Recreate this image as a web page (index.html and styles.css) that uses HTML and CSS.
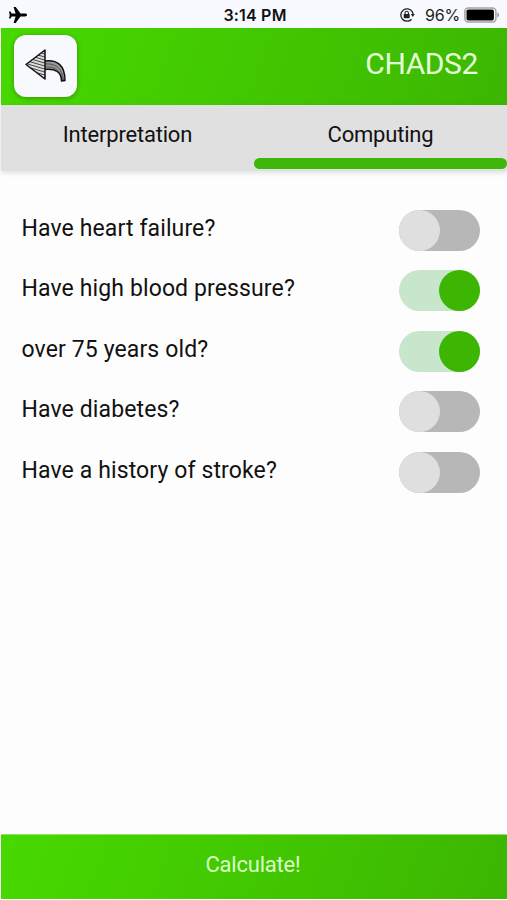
FILE: index.html
```html
<!DOCTYPE html>
<html lang="en">
<head>
<meta charset="utf-8">
<title>CHADS2</title>
<link rel="stylesheet" href="styles.css">
</head>
<body>
<div class="status">
  <svg class="plane" width="20" height="18" viewBox="0 0 20 18"><path d="M19 9c0-1-.9-1.400-2-1.400h-4.500L7.700 1H5.600l2 6.600H3.700L2.500 5.500H1L1.700 9 1 12.500h1.500l1.200-2.100h3.900L5.600 17h2.100l4.800-6.600H17c1.100 0 2-.4 2-1.400z"/></svg>
  <span class="time">3:14 PM</span>
  <div class="status-right">
    <svg width="16" height="16" viewBox="0 0 16 16"><path d="M13.200 4.600A6.200 6.200 0 1 0 12.600 12.200M13.200 4.600a6.200 6.200 0 0 1 .9 3.400" fill="none" stroke="#222" stroke-width="1.300"/><path d="M11.800 7h4l-2 3z" fill="#222"/><rect x="4.700" y="7" width="6" height="4.200" rx=".6" fill="#222"/><path d="M6 7.200V6a1.700 1.700 0 0 1 3.400 0v1.200" fill="none" stroke="#222" stroke-width="1.100"/></svg>
    <span class="percent">96%</span>
    <svg class="battery" width="36" height="16" viewBox="0 0 36 16"><rect x=".9" y=".9" width="31" height="14.200" rx="3.500" fill="#fff" stroke="#a3a1a8" stroke-width="1.500"/><rect x="2.500" y="2.500" width="27.400" height="11" rx="1.800"/><path d="M33.300 5.500c2.300.7 2.300 4.300 0 5z" fill="#98989c"/></svg>
  </div>
</div>
<header class="header">
  <button class="back" aria-label="Back">
    <svg width="44" height="38" viewBox="0 0 44 38">
      <defs>
        <clipPath id="head"><path d="M2 17 21 3v29z"/></clipPath>
      </defs>
      <path d="M2 17 21 3v29z" fill="#ddd"/>
      <g clip-path="url(#head)" stroke="#444" stroke-width="1"><path d="M0 13l24 7M0 16l24 7M0 19l24 7M0 22l24 7M0 10l24 7M2 7.500l22 6.500M4 5l20 6M8 3l16 5"/></g>
      <path d="M21 14c12-1.500 20 4 20 19.500l-3.500.5c-.2-9-6-12.500-16.500-11.500z" fill="#999"/>
      <path d="M21 17c10-1 17 4 18.500 16M21 20c10-1 15.500 4 17.500 13" fill="none" stroke="#333" stroke-width=".7"/>
      <path d="M21 14V3L2 17.500 21 32v-9.500c10.500-1 16.300 2.500 16.500 11.500l3.500-.5C41 18 33 12.500 21 14zm0 0v8.500" fill="none" stroke="#111" stroke-width="1.500" stroke-linejoin="round"/>
    </svg>
  </button>
  <h1 class="title">CHADS2</h1>
</header>
<nav class="tabs">
  <div class="tab">Interpretation</div>
  <div class="tab active">Computing</div>
</nav>
<main class="list">
  <div class="row"><span>Have heart failure?</span><i class="switch"></i></div>
  <div class="row"><span>Have high blood pressure?</span><i class="switch on"></i></div>
  <div class="row"><span>over 75 years old?</span><i class="switch on"></i></div>
  <div class="row"><span>Have diabetes?</span><i class="switch"></i></div>
  <div class="row"><span>Have a history of stroke?</span><i class="switch"></i></div>
</main>
<button class="calculate">Calculate!</button>
</body>
</html>
```
FILE: styles.css
```css
* { box-sizing: border-box; }
body {
  margin: 0;
  height: 900px;
  display: flex;
  flex-direction: column;
  overflow: hidden;
  background: #fdfdfd;
  color: #111;
  font-family: Roboto, sans-serif;
}
.status {
  height: 28px;
  flex: none;
  display: grid;
  grid-template-columns: 1fr auto 1fr;
  align-items: center;
  padding: 1px 7px 0 8px;
  background: #f7f9ff;
  font-family: Inter, sans-serif;
}
.time { font-size: 16px; font-weight: 600; letter-spacing: 0.2px; padding-left: 2px; }
.status-right { display: flex; align-items: center; justify-content: flex-end; }
.percent { font-size: 16px; margin: 0 4px 0 10px; letter-spacing: -0.2px; color: #222; }
.header {
  height: 77px;
  flex: none;
  display: flex;
  justify-content: space-between;
  align-items: center;
  padding: 0 29px 0 13px;
  margin-left: 1px;
  background: linear-gradient(110deg, #48d900, #3cb602);
}
.back {
  width: 63px;
  height: 62px;
  margin-bottom: 2px;
  padding: 0;
  border: 0;
  border-radius: 12px;
  background: #f7f9ff;
  box-shadow: 0 1px 5px rgba(0, 0, 0, 0.3);
  display: grid;
  place-items: center;
}
.title {
  margin: 0 0 5px;
  font-size: 30px;
  font-weight: 400;
  line-height: 36px;
  letter-spacing: -0.4px;
  color: #e5ffd9;
}
.tabs {
  height: 66px;
  flex: none;
  display: flex;
  margin-left: 1px;
  background: #e0e0e0;
  box-shadow: 0 2px 5px rgba(0, 0, 0, 0.12);
}
.tab {
  flex: 1;
  display: flex;
  flex-direction: column;
  align-items: center;
  justify-content: space-between;
  padding: 16px 0 2px;
  font-size: 22px;
  line-height: 28px;
  letter-spacing: -0.2px;
}
.active::after {
  content: "";
  width: 100%;
  height: 11px;
  border-radius: 6px;
  background: #3eb70a;
}
.list { flex: 1; padding: 38.500px 27px 0 21.500px; }
.row {
  height: 60.600px;
  display: flex;
  justify-content: space-between;
  align-items: flex-start;
  font-size: 23px;
  line-height: 37px;
  letter-spacing: 0.120px;
}
.switch {
  width: 81px;
  height: 41px;
  border-radius: 21px;
  background: #b7b7b7;
  display: flex;
}
.switch::before {
  content: "";
  width: 41px;
  height: 41px;
  border-radius: 50%;
  background: #dfdfdf;
}
.on { background: #c8e6cb; justify-content: flex-end; }
.on::before { background: #3cb602; }
.calculate {
  height: 65px;
  flex: none;
  margin: 0 0 1px 1px;
  padding: 0 2px 4px 0;
  border: 0;
  border-top: 1px solid #8be36a;
  background: linear-gradient(110deg, #48d900, #3cb602);
  color: #d9ffc6;
  font: 22px/28px Roboto, sans-serif;
  letter-spacing: -0.200px;
}
```
